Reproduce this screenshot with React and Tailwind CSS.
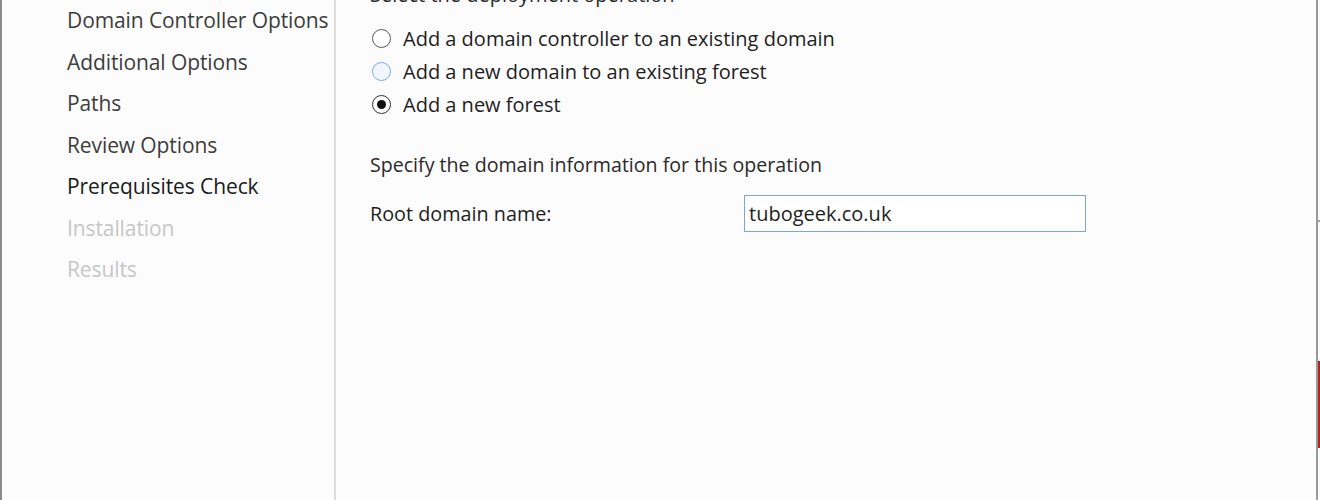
import React, { useState } from 'react';

const steps = [
    { label: 'Domain Controller Options', state: 'done' },
    { label: 'Additional Options', state: 'done' },
    { label: 'Paths', state: 'done' },
    { label: 'Review Options', state: 'done' },
    { label: 'Prerequisites Check', state: 'current' },
    { label: 'Installation', state: 'disabled' },
    { label: 'Results', state: 'disabled' },
];

const operations = [
    { id: 'existing-domain', label: 'Add a domain controller to an existing domain' },
    { id: 'new-domain', label: 'Add a new domain to an existing forest' },
    { id: 'new-forest', label: 'Add a new forest' },
];

// Radio circle drawn like the Windows one
const Radio = ({ checked, hover }) => (
    <span
        className={`flex items-center justify-center w-[19px] h-[19px] rounded-full border ${
            hover ? 'border-[#7fa9f2] bg-[#f1f6ff]' : checked ? 'border-[#333333] bg-white' : 'border-[#595959] bg-white'
        }`}
    >
        {checked && <span className="w-[9px] h-[9px] rounded-full bg-[#111111]" />}
    </span>
);

const App = () => {
    const [operation, setOperation] = useState('new-forest');
    const [domain, setDomain] = useState('tubogeek.co.uk');

    return (
        <div
            className="flex h-[500px] w-[1320px] overflow-hidden bg-[#fcfcfc] text-[#1e1e1e]"
            style={{ fontFamily: '"Open Sans", "Noto Sans", sans-serif' }}
        >
            {/* Window edge */}
            <div className="w-[2px] bg-[#8c8c8c]" />

            {/* Step list */}
            <div className="w-[332px] flex flex-col pl-[65px]">
                {steps.map((step) => (
                    <div
                        key={step.label}
                        className={`h-[41.5px] flex items-center text-[21px] tracking-[-0.1px] whitespace-nowrap ${
                            step.state === 'disabled'
                                ? 'text-[#c6c6c6]'
                                : step.state === 'current'
                                ? 'text-[#1a1a1a]'
                                : 'text-[#3c3c3c]'
                        }`}
                    >
                        {step.label}
                    </div>
                ))}
            </div>

            {/* Divider */}
            <div className="w-[2px] bg-[#dcdcdc]" />

            {/* Main panel */}
            <div className="flex-1 flex flex-col pl-[34px] text-[20px]">
                <div className="-mt-[20px] h-[30px] flex items-center text-[#2a2a2a] whitespace-nowrap">
                    Select the deployment operation
                </div>

                <div className="mt-[12px] flex flex-col">
                    {operations.map((op) => (
                        <label
                            key={op.id}
                            className="h-[33px] flex items-center gap-[12px] cursor-default"
                            onClick={() => setOperation(op.id)}
                        >
                            <span className="pl-[2px]">
                                <Radio checked={operation === op.id} hover={op.id === 'new-domain'} />
                            </span>
                            <span>{op.label}</span>
                        </label>
                    ))}
                </div>

                <div className="mt-[29px] h-[30px] flex items-center text-[19.6px] text-[#2a2a2a]">
                    Specify the domain information for this operation
                </div>

                <div className="mt-[15px] flex items-center">
                    <span className="w-[374px] text-[19.8px]">Root domain name:</span>
                    <input
                        className="w-[342px] h-[37px] border border-[#7aa6e6] bg-white px-[4px] text-[20px] text-[#1e1e1e] outline-none"
                        style={{ fontFamily: '"Open Sans", "Noto Sans", sans-serif' }}
                        value={domain}
                        onChange={(e) => setDomain(e.target.value)}
                    />
                </div>
            </div>

            {/* Right edge of the window behind */}
            <div className="w-[2px] bg-[#9a9a9a]" />
            <div className="w-[2px] flex flex-col">
                <div className="h-[220px]" />
                <div className="h-[2px] bg-[#a0a0a0]" />
                <div className="h-[139px]" />
                <div className="h-[87px] bg-[#b3221c]" />
            </div>
        </div>
    );
};

export default App;
